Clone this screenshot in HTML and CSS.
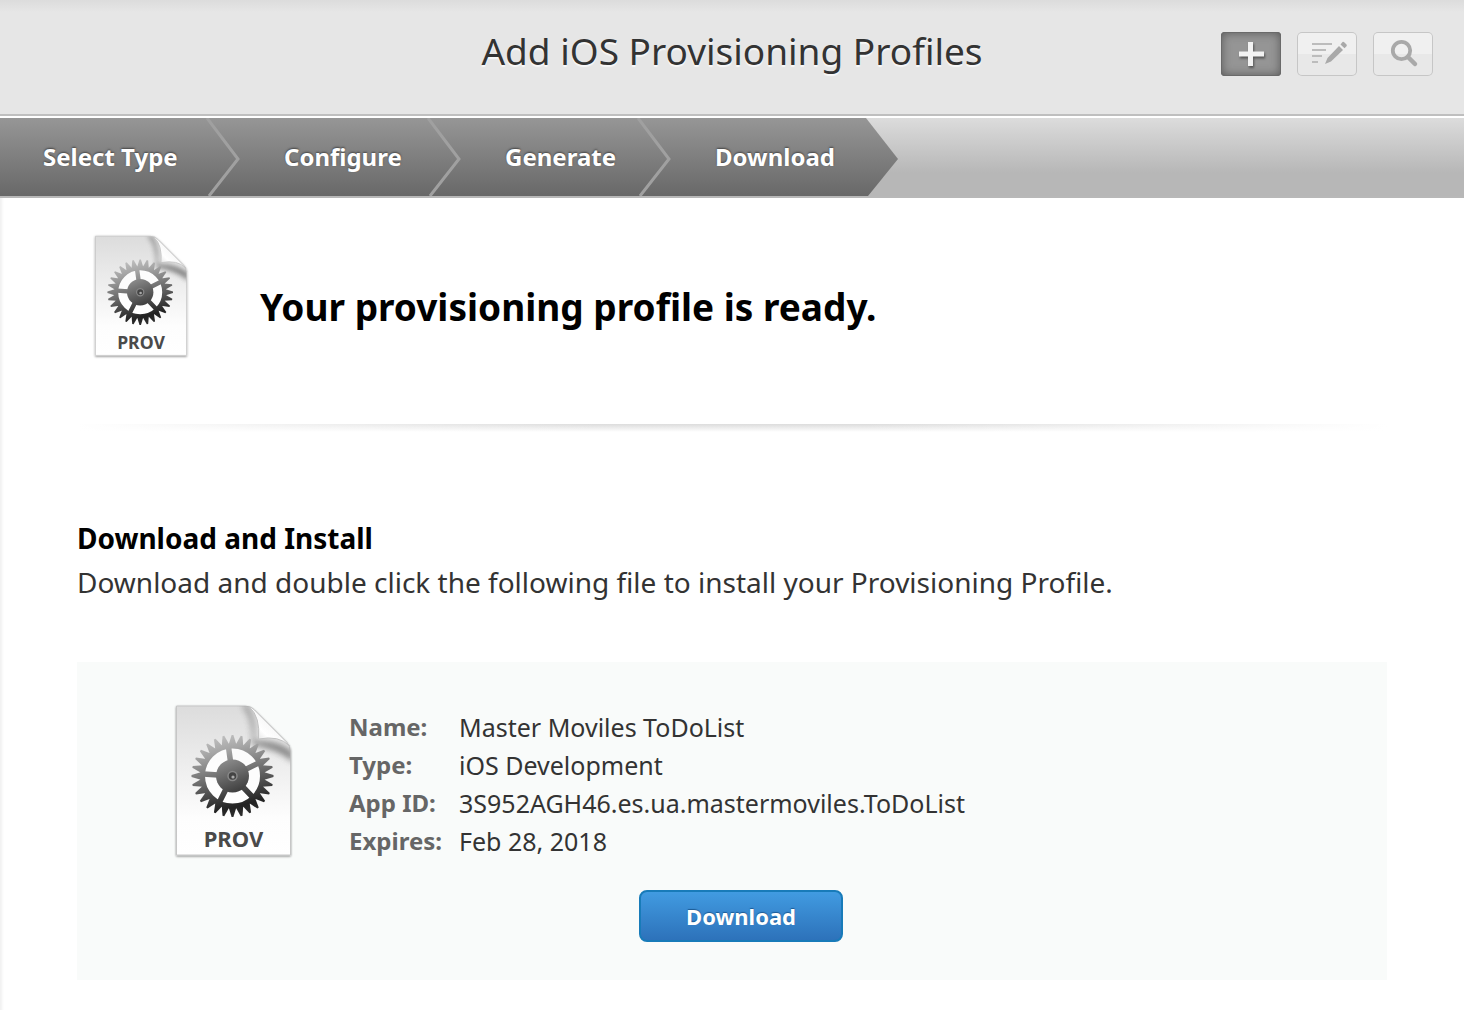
FILE: index.html
```html
<!DOCTYPE html>
<html lang="en">
<head>
<meta charset="utf-8">
<title>Add iOS Provisioning Profiles</title>
<link rel="stylesheet" href="styles.css">
</head>
<body>
<svg class="defs" aria-hidden="true">
  <defs>
    <linearGradient id="paper" x1="0" y1="0" x2="0" y2="1"><stop offset="0" stop-color="#dcdcdc"/><stop offset=".75" stop-color="#fdfdfd"/><stop offset="1" stop-color="#fff"/></linearGradient>
    <linearGradient id="metal" x1=".35" y1="0" x2=".6" y2="1"><stop offset="0" stop-color="#c4c4c4"/><stop offset=".2" stop-color="#a6a6a6"/><stop offset=".5" stop-color="#6c6c6c"/><stop offset=".85" stop-color="#222"/><stop offset="1" stop-color="#333"/></linearGradient>
    <linearGradient id="hub" x1=".3" y1="0" x2=".7" y2="1"><stop offset="0" stop-color="#8c8c8c"/><stop offset="1" stop-color="#3c3c3c"/></linearGradient>
    <linearGradient id="curl" x1="0" y1="1" x2="1" y2="0"><stop offset="0" stop-color="#c4c4c4"/><stop offset=".35" stop-color="#fff"/><stop offset="1" stop-color="#e6e6e6"/></linearGradient>
    <filter id="soft" x="-20%" y="-20%" width="140%" height="140%"><feGaussianBlur stdDeviation="3"/></filter>
    <filter id="drop" x="-10%" y="-10%" width="120%" height="120%"><feDropShadow dx="0" dy="1" stdDeviation="1.2" flood-opacity=".45"/></filter>
    <clipPath id="sheet"><path d="M4 4H73Q78 4 82 8L114 40Q118 44 118 49V153H4Z"/></clipPath>
    <path id="tooth" d="M-4 -31 L-.9 -41 H.9 L4 -31Z"/>
    <g id="teeth">
      <use href="#tooth"/><use href="#tooth" transform="rotate(12.857)"/><use href="#tooth" transform="rotate(25.714)"/><use href="#tooth" transform="rotate(38.571)"/><use href="#tooth" transform="rotate(51.429)"/><use href="#tooth" transform="rotate(64.286)"/><use href="#tooth" transform="rotate(77.143)"/>
    </g>
    <mask id="gear" maskUnits="userSpaceOnUse" x="-43" y="-43" width="86" height="86">
      <g fill="#fff">
        <use href="#teeth"/><use href="#teeth" transform="rotate(90)"/><use href="#teeth" transform="rotate(180)"/><use href="#teeth" transform="rotate(270)"/>
      </g>
      <circle r="30" fill="none" stroke="#fff" stroke-width="5"/>
      <path d="M0 0L-4 -29M0 0L26 -13M0 0L20 21M0 0L-13 26M0 0L-29 -2" stroke="#fff" stroke-width="5.5"/>
    </mask>
    <symbol id="prov" viewBox="0 0 122 160">
      <path d="M4 4H73Q78 4 82 8L114 40Q118 44 118 49V153H4Z" fill="url(#paper)" stroke="#c6c6c6" stroke-width="1" filter="url(#drop)"/>
      <g clip-path="url(#sheet)">
        <path d="M73 2Q84 14 82 39Q107 38 121 51L121 60Q104 46 80 43Q81 15 70 4Z" fill="#555" opacity=".7" filter="url(#soft)"/>
      </g>
      <g transform="translate(60 74)">
        <circle r="28" fill="#fff" opacity=".85"/>
        <rect x="-43" y="-43" width="86" height="86" fill="url(#metal)" mask="url(#gear)"/>
        <circle r="16.5" fill="url(#hub)"/>
        <circle r="4.5" fill="#444" stroke="#888" stroke-width="1.5"/>
        <circle cx=".5" cy="1" r="1.6" fill="#aaa"/>
      </g>
      <path d="M77 5Q88 15 86 37Q107 33 117 44L114 40L82 8Q79 5 77 5Z" fill="url(#curl)" stroke="#c2c2c2" stroke-width="1"/>
      <text x="61" y="145" text-anchor="middle" class="prov-label">PROV</text>
    </symbol>
  </defs>
</svg>

<header class="header">
  <h1 class="title">Add iOS Provisioning Profiles</h1>
  <div class="tools">
    <button class="tool tool-active" type="button" aria-label="Add">
      <svg width="60" height="44" viewBox="0 0 60 44"><path d="M27 10h5v9.500h11v5H32V34h-5v-9.500H18v-5h9z" fill="#f2f2f2" class="plus"/></svg>
    </button>
    <button class="tool" type="button" aria-label="Edit">
      <svg width="60" height="44" viewBox="0 0 60 44"><path d="M15 12h20M15 18h14M15 24h10M15 30h6" stroke="#bcbcbc" stroke-width="2"/><path d="M28 32l2.500-6L42 14l4 4-12 11.500zM43.500 12.500L45.500 10q1-.5 2 .5l2 2q.8.900 0 1.700l-2 2z" fill="#a9a9a9"/></svg>
    </button>
    <button class="tool" type="button" aria-label="Search">
      <svg width="60" height="44" viewBox="0 0 60 44" fill="none" stroke="#a9a9a9"><circle cx="28.500" cy="18.500" r="8.700" stroke-width="3.800"/><path d="M35 25l7 7" stroke-width="4.500" stroke-linecap="round"/></svg>
    </button>
  </div>
</header>

<nav class="steps" aria-label="Progress">
  <ol class="step-list">
    <li class="step step-type">Select Type<svg class="chevron" viewBox="0 0 34 78"><path d="M1 0L32 41L3 78"/></svg></li>
    <li class="step step-configure">Configure<svg class="chevron" viewBox="0 0 34 78"><path d="M1 0L32 41L3 78"/></svg></li>
    <li class="step step-generate">Generate<svg class="chevron" viewBox="0 0 34 78"><path d="M1 0L32 41L3 78"/></svg></li>
    <li class="step step-download" aria-current="step">Download</li>
  </ol>
</nav>

<main class="content">
  <section class="ready">
    <svg class="ready-icon" role="img" aria-label="Provisioning profile"><use href="#prov"/></svg>
    <h2 class="ready-title">Your provisioning profile is ready.</h2>
  </section>
  <div class="divider"></div>
  <section>
    <h3 class="install-title">Download and Install</h3>
    <p class="install-text">Download and double click the following file to install your Provisioning Profile.</p>
    <div class="panel">
      <div class="profile">
        <svg class="profile-icon" role="img" aria-label="Provisioning profile"><use href="#prov"/></svg>
        <dl class="details">
          <dt>Name:</dt><dd>Master Moviles ToDoList</dd>
          <dt>Type:</dt><dd>iOS Development</dd>
          <dt>App ID:</dt><dd>3S952AGH46.es.ua.mastermoviles.ToDoList</dd>
          <dt>Expires:</dt><dd>Feb 28, 2018</dd>
        </dl>
      </div>
      <button class="download" type="button">Download</button>
    </div>
  </section>
</main>
</body>
</html>
```
FILE: styles.css
```css
* { box-sizing: border-box; }

body {
  margin: 0;
  min-height: 100vh;
  background: #fff;
  color: #333;
  font-family: "Lucida Grande", "Noto Sans", "Open Sans", sans-serif;
  font-size: 24px;
}

h1, h2, h3, p, dl, dd, ol { margin: 0; padding: 0; }
svg { display: block; }
.defs { position: absolute; width: 0; height: 0; }
.prov-label { font-size: 22px; font-weight: 700; fill: #4a4a4a; }

.header {
  display: grid;
  grid-template-columns: 1fr auto 1fr;
  align-items: start;
  height: 116px;
  padding: 32px 31px 0;
  border-bottom: 2px solid #bfbfbf;
  background: linear-gradient(#dcdcdc, #e6e6e6 12px);
}
.title {
  grid-column: 2;
  font-size: 37px;
  font-weight: 400;
  line-height: 38px;
  text-shadow: 0 2px 1px #f8f8f8;
}
.tools { display: flex; justify-content: flex-end; gap: 16px; }
.tool {
  width: 60px;
  height: 44px;
  padding: 0;
  border: 0;
  border-radius: 5px;
  box-shadow: inset 0 0 0 1px #c6c6c6;
  background: linear-gradient(#f0f0f0 50%, #e8e8e8 50%);
}
.tool-active {
  border-radius: 4px;
  background: #959595;
  box-shadow: inset 0 0 0 1px #6a6a6a, inset 0 0 10px 1px #5c5c5c;
}
.plus { filter: drop-shadow(1px 2px 1px #555); }

.steps {
  height: 82px;
  border-top: 2px solid #fff;
  border-bottom: 2px solid #b8b8b8;
  background: linear-gradient(#dcdcdc, #b7b7b7 70%);
}
.step-list {
  display: flex;
  width: max-content;
  list-style: none;
  background: linear-gradient(#969696, #686868);
  clip-path: polygon(0 0, calc(100% - 32px) 0, 100% 41px, calc(100% - 30px) 100%, 0 100%);
}
.step {
  display: flex;
  justify-content: space-between;
  height: 78px;
  padding-left: 44px;
  color: #fff;
  font-weight: 700;
  line-height: 78px;
  text-shadow: 0 -1px 2px #444;
}
.step-type { width: 240px; padding-left: 43px; }
.step-configure { width: 221px; }
.step-generate { width: 210px; }
.step-download { width: 227px; }
.chevron { width: 34px; height: 78px; fill: none; stroke: #a0a0a0; stroke-width: 3; }

.content {
  padding: 35px 77px 31px;
  box-shadow: inset 4px 0 3px -2px #f0f0f0;
}
.ready { display: flex; gap: 70px; height: 191px; padding-left: 15px; }
.ready-icon { width: 98px; height: 128px; }
.ready-title { padding-top: 50px; color: #000; font-size: 37px; font-weight: 700; line-height: 48px; }
.divider {
  height: 8px;
  background:
    linear-gradient(90deg, #fff, transparent 40%, transparent 60%, #fff),
    linear-gradient(#dcdcdc, #fff);
}
.install-title { margin-top: 86px; color: #000; font-size: 28px; font-weight: 700; line-height: 40px; }
.install-text { font-size: 28px; line-height: 40px; margin-top: 4px; }

.panel {
  margin-top: 60px;
  padding: 40px 95px 38px;
  background: #f9fbfa;
}
.profile { display: flex; gap: 54px; height: 188px; }
.profile-icon { width: 123px; height: 160px; }
.details {
  display: grid;
  grid-template-columns: 110px auto;
  align-content: start;
  padding-top: 6px;
  line-height: 38px;
}
.details dt { color: #666; font-weight: 700; }
.details dd { font-size: 25px; }
.download {
  display: block;
  width: 204px;
  height: 52px;
  margin-left: 467px;
  padding: 0;
  border: 2px solid #187bb9;
  border-radius: 8px;
  background: linear-gradient(#419be1, #2d72ba);
  color: #fff;
  font: inherit;
  font-size: 22px;
  font-weight: 700;
  text-shadow: 0 -1px 1px #1c5a94;
}
```
